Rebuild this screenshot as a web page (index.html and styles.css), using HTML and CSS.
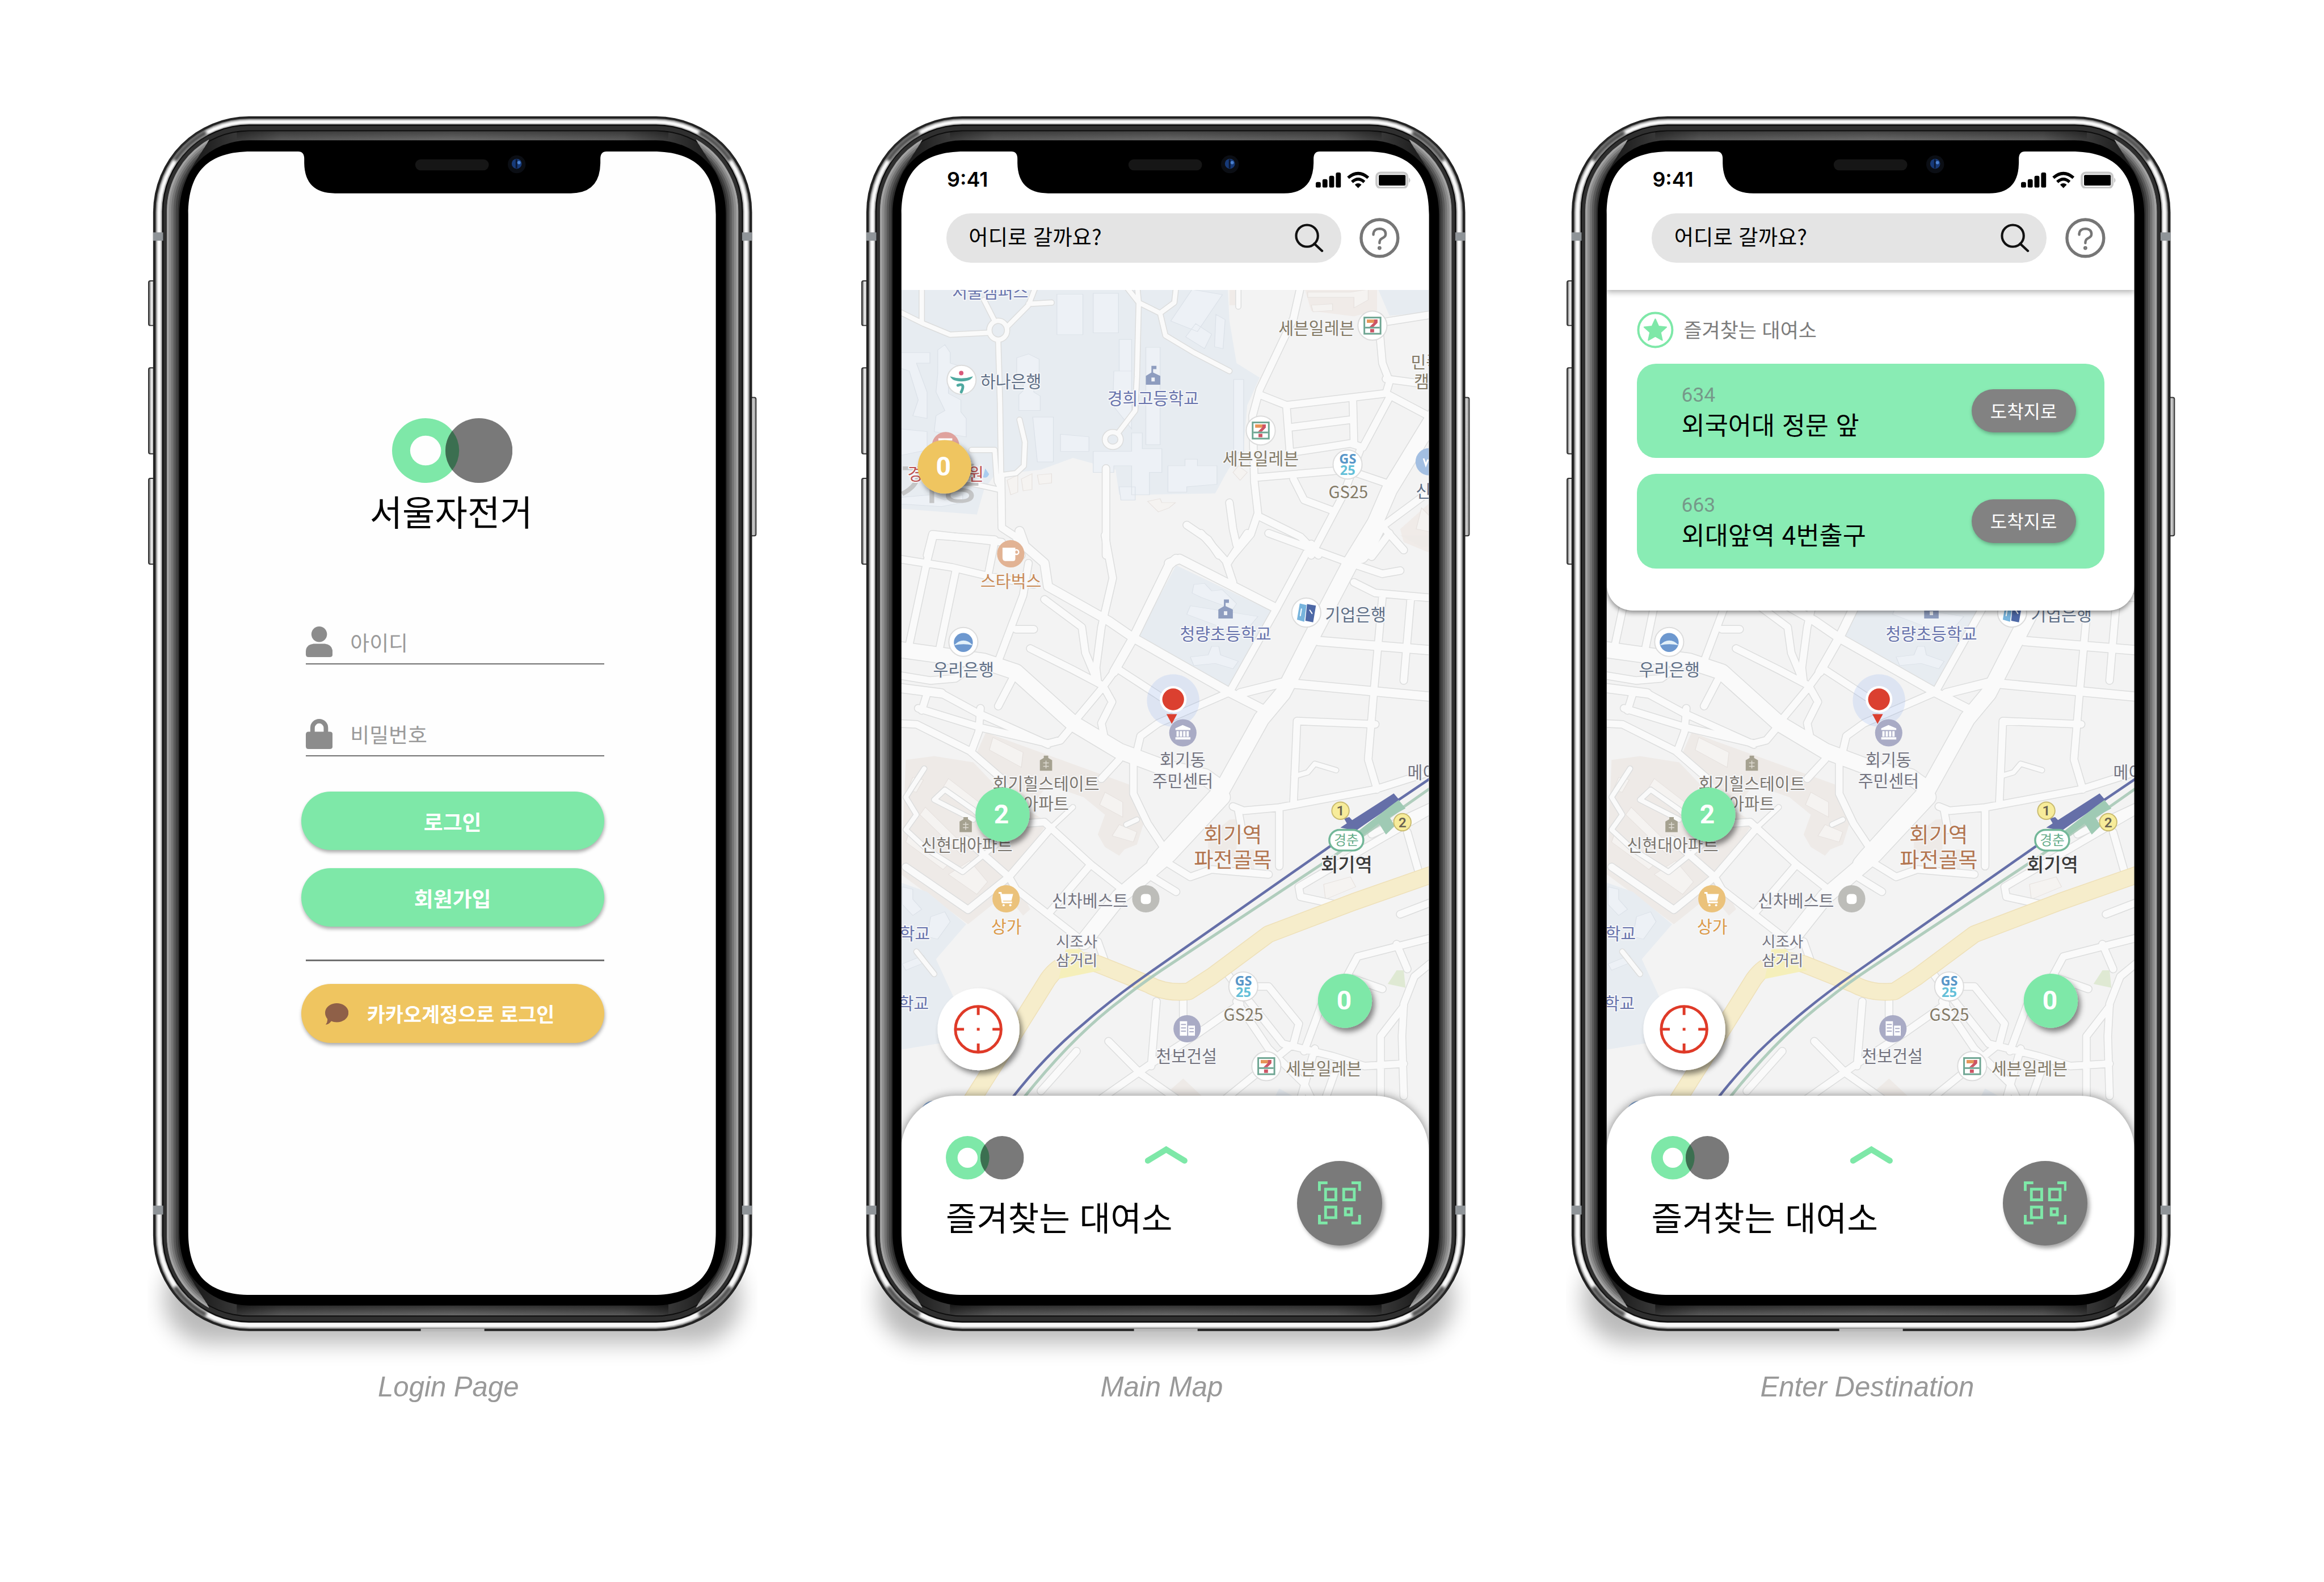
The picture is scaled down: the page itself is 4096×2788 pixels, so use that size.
FILE: index.html
```html
<!DOCTYPE html>
<html lang="ko">
<head>
<meta charset="utf-8">
<title>서울자전거</title>
<link rel="stylesheet" href="styles.css">
</head>
<body>

<svg class="library" width="0" height="0" aria-hidden="true">
  <defs>
    <linearGradient id="topbar" x1="0" x2="1" y1="0" y2="0">
      <stop offset="0" stop-color="#0c0c0c"/><stop offset=".07" stop-color="#222"/><stop offset=".2" stop-color="#5a5a5a"/><stop offset=".5" stop-color="#6a6a6a"/><stop offset=".8" stop-color="#5a5a5a"/><stop offset=".93" stop-color="#222"/><stop offset="1" stop-color="#0c0c0c"/>
    </linearGradient>
    <linearGradient id="barfadeTop" x1="0" x2="0" y1="0" y2="1">
      <stop offset="0" stop-color="#000" stop-opacity=".35"/><stop offset="1" stop-color="#000" stop-opacity="0"/>
    </linearGradient>
    <linearGradient id="barfadeBottom" x1="0" x2="0" y1="0" y2="1">
      <stop offset="0" stop-color="#000" stop-opacity=".6"/><stop offset="1" stop-color="#000" stop-opacity="0"/>
    </linearGradient>
    <linearGradient id="key" x1="0" x2="1" y1="0" y2="0">
      <stop offset="0" stop-color="#444"/><stop offset=".35" stop-color="#eee"/><stop offset="1" stop-color="#999"/>
    </linearGradient>
    <filter id="soft" x="-20%" y="-60%" width="140%" height="240%"><feGaussianBlur stdDeviation="20"/></filter>
    <filter id="soft-s" x="-50%" y="-50%" width="200%" height="200%"><feGaussianBlur stdDeviation="2.500"/></filter>
    <filter id="drop" x="-30%" y="-30%" width="180%" height="180%"><feDropShadow dx="5" dy="7" stdDeviation="5" flood-color="#000" flood-opacity=".45"/></filter>

    <mask id="opening" maskUnits="userSpaceOnUse" x="-20" y="-10" width="1120" height="2300">
      <rect x="-20" y="-10" width="1120" height="2300" fill="#fff"/>
      <path fill="#000" d="M63,176C63,99 99,63 176,63H260Q271,63 271,76V84Q272,138 326,138H749Q801,138 802,84V76Q802,63 813,63H896C973,63 1009,99 1009,176V2000C1009,2077 973,2113 896,2113H176C99,2113 63,2077 63,2000Z"/>
    </mask>
    <clipPath id="wedge">
      <path d="M103,38C60,62 24,110 24,172V2006C24,2068 60,2116 103,2140C80,2100 47,2065 47,2002V176C47,113 80,78 103,38Z"/>
    </clipPath>

    <g id="side-glow" fill="none" stroke-width="5">
      <g clip-path="url(#wedge)">
        <path stroke="#a2a2a2" d="M101,44A146,146 0 0 0 27,170V2008A146,146 0 0 0 101,2134"/>
        <path stroke="#8c8c8c" d="M101,48A142,142 0 0 0 31,170V2008A142,142 0 0 0 101,2130"/>
        <path stroke="#747474" d="M101,52A138,138 0 0 0 35,170V2008A138,138 0 0 0 101,2126"/>
        <path stroke="#5a5a5a" d="M101,56A134,134 0 0 0 39,170V2008A134,134 0 0 0 101,2122"/>
        <path stroke="#424242" d="M101,60A130,130 0 0 0 43,170V2008A130,130 0 0 0 101,2118"/>
        <path stroke="#2c2c2c" d="M101,64A126,126 0 0 0 47,170V2008A126,126 0 0 0 101,2114"/>
      </g>
      <path stroke="#4a4a4a" stroke-width="9" filter="url(#soft-s)" d="M39,79A162,162 0 0 1 95,29"/>
      <path stroke="#4a4a4a" stroke-width="9" filter="url(#soft-s)" d="M39,2099A162,162 0 0 0 95,2149"/>
    </g>

    <symbol id="frame" viewBox="-10 0 1094 2270">
      <g mask="url(#opening)">
        <rect x="20" y="2040" width="1034" height="160" rx="80" fill="#000" opacity=".27" filter="url(#soft)"/>
        <g fill="url(#key)" stroke="#333" stroke-width="2">
          <rect x="-8" y="295" width="14" height="80" rx="3"/>
          <rect x="-8" y="451" width="14" height="154" rx="3"/>
          <rect x="-8" y="649" width="14" height="154" rx="3"/>
          <rect x="1067" y="504" width="14" height="248" rx="3"/>
        </g>
        <rect width="1074" height="2178" rx="172" fill="#232323"/>
        <rect x="4.500" y="4" width="1065" height="2170" rx="168" fill="#8c8c8c"/>
        <rect x="6.500" y="6" width="1061" height="2166" rx="166" fill="#d2d2d2"/>
        <rect x="8.500" y="8" width="1057" height="2162" rx="164" fill="#f8f8f8"/>
        <rect x="13.500" y="12.500" width="1047" height="2151" rx="159" fill="#bdbdbd"/>
        <rect x="16" y="14.500" width="1042" height="2148" rx="156" fill="#0c0c0c"/>
        <rect x="18.500" y="17" width="1037" height="2143" rx="153" fill="#2f2f2f"/>
        <rect x="25" y="25" width="1024" height="2127" rx="147" fill="#0d0d0d"/>
        <rect x="26" y="27" width="1022" height="2123" rx="146" fill="url(#topbar)"/>
        <rect x="150" y="27" width="774" height="16" fill="url(#barfadeTop)"/>
        <rect x="150" y="2130" width="774" height="20" fill="url(#barfadeBottom)"/>
        <rect x="44" y="43" width="986" height="2089" rx="128" fill="#000"/>
        <use href="#side-glow"/>
        <use href="#side-glow" transform="translate(1074 0) scale(-1 1)"/>
        <g fill="#8f9498">
          <rect y="208" width="18" height="15"/><rect x="1056" y="208" width="18" height="15"/>
          <rect y="1953" width="18" height="16"/><rect x="1056" y="1953" width="18" height="16"/>
        </g>
        <path d="M480,2176H594" stroke="#b9b9b9" stroke-width="5"/>
      </g>
      <rect x="470" y="77" width="132" height="20" rx="10" fill="#161616"/>
      <circle cx="652" cy="86" r="16" fill="#0b0e14"/>
      <circle cx="652" cy="85" r="9" fill="#173a78"/>
      <rect x="650" y="77" width="3" height="16" fill="#0b1730"/>
      <circle cx="656" cy="83" r="3" fill="#4a80cf"/>
    </symbol>

    <symbol id="logo" viewBox="0 0 140 78">
      <path fill="#7ee8a8" fill-rule="evenodd" d="M39,0a39,39 0 1 1 0,78a39,39 0 1 1 0,-78zM39,21a18,18 0 1 0 0,36a18,18 0 1 0 0,-36z"/>
      <circle cx="101" cy="39" r="39" fill="#797979"/>
      <path fill="#3b6f50" d="M70,15.400A39,39 0 0 1 70,62.600A39,39 0 0 1 70,15.400z"/>
    </symbol>

    <!-- base map: roads are stroked twice, once as casing and once as surface -->
    <g id="roads" fill="none" stroke-linejoin="round" stroke-linecap="round">
      <g transform="matrix(.6378 0 0 .472 1600 250)">
        <g class="w1">
          <path d="M0,640L90,700 165,742 270,735M85,560V690M260,610L290,690M405,560L385,630 325,712M385,625L450,620M300,770L305,1000 308,1280M690,550L695,620 755,660 770,745 850,810 950,880M800,560L795,620 755,660M660,560L695,620 690,900 685,1030 640,1110M360,1065L375,1150 372,1240 350,1268 310,1275M225,1180H290L296,1300 308,1330M200,1300L250,1315 300,1330M975,560V635"/>
          <ellipse cx="300" cy="725" rx="25" ry="36"/><ellipse cx="622" cy="1140" rx="22" ry="28"/>
        </g>
        <g class="w2">
          <path d="M308,1280L310,1475M603,1250V1580M1150,560L1130,680 1035,950 1015,1050 1020,1300 1030,1420 1010,1500 960,1580M1035,970L1110,1010 1390,965 1530,1065M1390,965L1400,920 1380,850 1370,700M1380,695L1530,663M1390,910L1530,935M1110,1010L1120,1190 1220,1170 1290,1155 1325,1170 1400,980M1115,1095L1290,1065M1297,990L1300,1150M1020,1285L1280,1255 1400,1310M1130,1290L1160,1370 1240,1410M1320,1170L1270,1350 1180,1580M950,1380L960,1480 970,1540M830,1465L890,1520 920,1580M1030,1430L1150,1510 1200,1580M1530,1320L1380,1470 1440,1560M100,1580L115,1500 310,1530M310,1475L350,1510 365,1580M1380,1470L1340,1580"/>
        </g>
        <path class="w3" d="M1540,1020L1400,1330 1320,1580"/>
      </g>
      <g transform="matrix(.6378 0 0 .3827 1600 960)">
        <g class="w2">
          <path d="M0,105L170,150 270,190 400,230M120,0L290,20M118,0L100,120 50,510M180,170L135,530M290,30L270,200M385,130L370,280 300,590M430,300L535,430 545,550 580,690M600,0L622,200 590,430 575,620 580,690M0,650L110,680 180,670 220,620M75,810L250,900 440,975 475,960 510,890M0,880L70,885 220,1010 310,1140M100,740L85,820M250,810L245,920 225,1010M350,640L300,800M350,440L400,440M390,530L510,630 590,700M870,-10L940,120 960,220M1000,-10L945,130M1060,-10L1290,130M1180,40L1080,350 950,735M1290,130L1380,180 1430,165M1400,-10L1350,100M1300,220L1360,270 1530,295M1380,290L1355,750 1340,1050 1365,1190M1460,290L1440,680M640,630L760,760M950,735L750,880 700,940 690,1010M625,640L590,720 510,880M600,720L620,780 590,880 600,960M1360,885L1140,870 1130,1260M960,1270L990,1290 1090,1275 1360,1190 1530,1100M1530,1260L1350,1400M1090,1290V1550M975,1290L985,1380M680,1060V1210L720,1350 780,1500M640,1050L590,1140M440,980L240,830 140,740"/>
        </g>
        <g class="w2b">
          <path d="M360,-20L375,50 430,130 440,240 610,400 680,480 950,735 1050,820M780,130L810,110 1080,340M800,110L780,140 680,480 625,640M1200,495L1530,540M980,740L1100,690 1530,758M950,735L1050,820M0,710L140,740"/>
        </g>
        <path class="w1" d="M1130,1130L1170,1110 1190,1070 1250,1100"/>
        <path class="w3" d="M0,530L260,590 350,640 510,880 640,1010 760,1085 880,1130 930,1190"/>
        <path class="w3" d="M1360,-60L1290,130 1180,480 1100,740 1040,860 930,1190 760,1500 740,1540"/>
      </g>
      <g transform="matrix(.6378 0 0 .4464 1600 1300)">
        <g class="w1"><path d="M92,175L40,290 70,360 40,420 100,500 200,590 330,440M230,380L120,300 150,260 230,340 310,450M510,330L450,410M70,910L120,1000M690,380L660,400"/></g>
        <g class="w2">
          <path d="M40,570L215,742 330,610 450,410M210,460L330,610 350,660 440,760 530,860M330,400L430,390 560,560 640,650M560,560L440,760M580,870L600,950M720,600L800,670M760,540L840,610 900,580 1060,600M1530,330L1360,470 1145,650 1150,690 1280,730M1450,430L1480,580M1530,705L1430,760M1530,850L1310,930 1280,1010 1380,1060M1420,880L1450,980M1530,940L1470,1010 1440,1120 1435,1250 1440,1490M1440,1130L1375,1250V1490M1220,1080L1160,1310M745,1110L730,1370M820,1100V1170M610,1270L700,1400 800,1500M980,1120L860,1240 730,1360 590,1500M970,1110L1060,1300 1160,1440 1180,1500M940,990L970,1050 1060,1050 1145,1200 1130,1280 940,1500M1000,1100L1100,1280 1240,1330 1330,1370M520,1310L420,1470M1250,1380L1220,1500M1190,1300L1150,1500M1330,1370L1440,1360"/>
        </g>
        <path class="w3" d="M930,290L780,520 640,690 540,870"/>
      </g>
    </g>

    <g id="school-flag"><path fill="#8e9dbf" d="M-13,14V-2L-3,-8V-20H6V-14H0V-8L13,-2V14Z"/><rect x="-3" y="1" width="6" height="7" fill="#eef1f6"/></g>
    <g id="apartment"><path fill="#a5a190" d="M-11,13V-6L-4,-10V-14H4V-10L11,-6V13Z"/><path stroke="#dedbd2" stroke-width="1.500" d="M-5,-1H5M-5,5H5M0,-5V9"/></g>
    <g id="seven">
      <circle r="26" fill="#fff" stroke="#dcdcdc" stroke-width="2"/>
      <rect x="-14.500" y="-14.500" width="29" height="29" fill="#fff" stroke="#6ea592" stroke-width="3"/>
      <path fill="#e79558" d="M-10,-11H9V-5H-10Z"/><path fill="#cc5565" d="M9,-11V-5L2,2H-5L3,-6V-11ZM-4,6H3V12H-4Z"/><path fill="#6ea592" d="M-13,2H13V5H-13Z"/>
    </g>
    <g id="dot-bank"><circle r="26" fill="#fff" stroke="#dcdcdc" stroke-width="2"/></g>

    <g id="basemap">
      <rect x="1600" y="500" width="1000" height="1620" fill="#f3f3f3"/>
      <g transform="matrix(.6378 0 0 .472 1600 250)">
        <path fill="#e7ecf1" d="M0,560H945L950,690 970,850 1035,905 1000,1010 990,1160 940,1270 910,1345 700,1350 640,1350 630,1255 510,1210 420,1255 290,1275 260,1330 240,1425 0,1400ZM1365,560H1530V655L1400,670Z"/>
        <path fill="#f0ebe8" d="M1160,560H1365V650L1300,672 1180,652ZM1530,1360L1430,1480 1440,1530 1530,1580ZM950,560H970V630H950Z"/>
        <g class="building">
          <path d="M465,588H538V742H465ZM567,585H638V735H567ZM845,570L930,590 860,730 785,690ZM855,700L900,740 880,795 827,750ZM912,665L938,685 932,795 908,788ZM640,760H675V880H640ZM715,790H755V1160H715ZM625,880H675V1100L622,1010ZM962,912H990V1190H962ZM352,830L385,815 415,835V905H400V960L418,975V1030H358V970L370,955V905H352ZM397,1055H455V1225H410ZM475,1120L555,1130V1185H475ZM675,1115H705V1175H760V1265H725V1350H675V1240H625V1265H567V1185H675ZM777,1240H825V1215H860V1240H915V1310L830,1320V1340H777ZM640,1320H685V1370H645ZM27,810H108V850H70L100,960V1060L60,1050 75,990 50,880 27,870ZM130,800L150,780 165,810V850L190,860V900L160,930V965L195,990V1035L210,1060V1130L120,1110 125,1050 150,1030 125,960 130,890ZM27,1100L100,1110V1180L27,1200ZM27,1360L110,1350 150,1370 200,1350V1380L140,1395 27,1385Z"/>
        </g>
        <g class="building-b">
          <path d="M1170,580H1290L1340,570V610L1300,640V600H1240L1170,600ZM1180,630L1240,625V650L1185,655ZM960,1265L975,1240 1000,1265 980,1295ZM325,1295L355,1275V1340L335,1350ZM365,1290L395,1270V1330L370,1335ZM410,1275L450,1270V1305L415,1310ZM720,1375L755,1365 760,1380 798,1380 780,1400 750,1415ZM1490,1400L1512,1430V1490L1475,1480Z"/>
        </g>
      </g>
      <g transform="matrix(.6378 0 0 .3827 1600 960)">
        <path fill="#e7ecf1" d="M800,140L1075,360 955,715 690,480Z"/>
        <path fill="#eeeae7" d="M1430,0H1530V50L1490,55Z"/>
        <path class="building" d="M850,230L880,225 900,260 930,255 970,320 960,345 870,290 845,270ZM840,330L1030,380 1010,420 990,470 830,370ZM840,570L890,560 900,520H920L925,560 975,590 960,625 910,600 850,610Z"/>
      </g>
      <g transform="matrix(.6378 0 0 .4464 1600 1300)">
        <path fill="#eeeae7" d="M40,140L120,125 230,150 330,300 440,390 340,600 390,740 370,765 320,680 215,800 27,600ZM265,30L670,240 710,390 690,480 655,500 640,525 600,490 580,440 600,360 540,290 440,240 390,330 240,110ZM950,380L970,378V500H1020V610L985,605 960,540 890,510V450ZM780,1470L820,1420 880,1500H770Z"/>
        <path fill="#e7ecf1" d="M0,620L100,670 210,800 125,940 180,1110 150,1275 0,1310ZM1075,1500L1090,1460 1140,1500Z"/>
        <path class="building" d="M30,650L60,660V700L85,740 60,765 30,720ZM110,770L150,750 165,790 130,860 100,850ZM30,960L90,925 100,950 40,985Z"/>
        <path class="building-b" d="M285,50L370,110 365,170 275,100ZM60,210L90,220 70,270 45,260ZM160,215L300,370 285,400 145,250ZM95,330L215,500 195,520 80,360ZM50,430L160,560 145,580 40,470ZM220,545L270,630 240,680 160,600ZM600,270L650,310V370L585,320ZM640,400L690,430 680,470 620,445ZM1215,640L1290,610 1305,650 1220,700Z"/>
        <path fill="#dfe9d3" d="M1420,985L1395,1040 1445,1055 1440,985Z"/>
      </g>
      <use href="#roads" class="casing"/>
      <use href="#roads" class="surface"/>
      <g transform="matrix(.6378 0 0 .4464 1600 1300)" fill="none" stroke-linejoin="round">
        <path class="artery-edge" d="M220,1520L300,1340 440,1020Q490,920 580,960L720,1040Q770,1080 835,1070L900,1010 1060,840 1300,710 1540,590"/>
        <path class="artery" d="M220,1520L300,1340 440,1020Q490,920 580,960L720,1040Q770,1080 835,1070L900,1010 1060,840 1300,710 1540,590"/>
        <path fill="#f5efba" d="M490,900H530L590,985 470,1020Z"/>
        <path class="rail-green" d="M370,1500Q510,1250 640,1110Q700,1040 780,965L1240,530 1540,228"/>
        <path class="rail-blue" d="M338,1500Q430,1330 540,1200Q620,1100 720,1000L1240,480 1540,190"/>
        <path fill="#9fcab4" d="M1300,440L1425,300 1445,335 1400,370 1415,405 1390,440 1370,395 1320,450Z"/>
        <path fill="#656fa8" d="M1262,412L1280,395 1272,375 1287,370 1295,382 1412,275 1427,300 1305,425Z"/>
      </g>

      <use href="#school-flag" x="2069" y="676"/><use href="#school-flag" x="2199" y="1095"/>
      <use href="#apartment" x="1877" y="1369"/><use href="#apartment" x="1733" y="1479"/>
      <use href="#seven" x="2462.300" y="584"/><use href="#seven" x="2262" y="772"/><use href="#seven" x="2272" y="1911.600"/>
      <g fill="none" stroke-linecap="round">
        <use href="#dot-bank" x="1725.600" y="681"/>
        <circle cx="1725" cy="669" r="4" fill="#d8597a"/><path fill="#4fa9a0" d="M1705,675Q1725,682 1746,675Q1742,684 1725,684Q1709,684 1705,675Z"/><path stroke="#4fa9a0" stroke-width="5" d="M1719,691Q1733,686 1725,703"/>
        <use href="#dot-bank" x="1728.800" y="1151"/>
        <circle cx="1728.800" cy="1152" r="17" fill="#6d98cf"/><path fill="#e3f1fa" d="M1712,1157Q1729,1140 1746,1157Q1729,1153 1712,1157Z"/>
        <use href="#dot-bank" x="2343.700" y="1098.500"/>
        <path fill="#77b4dd" d="M2332,1082L2344,1085 2340,1115 2327,1111Z"/><path fill="#4d68a6" d="M2345,1083L2361,1086 2356,1116 2342,1113Z"/><path stroke="#fff" stroke-width="2" d="M2335,1092L2333,1104M2350,1094L2354,1100"/>
        <use href="#dot-bank" x="2417.700" y="833"/><use href="#dot-bank" x="2230.800" y="1768.700"/>
      </g>
      <circle cx="1813.700" cy="993" r="24.500" fill="#e2b394"/><path fill="#fff" d="M1799,982H1822V1002Q1822,1006 1818,1006H1804Q1799,1006 1799,1000Z"/><circle cx="1824" cy="990" r="4" fill="none" stroke="#fff" stroke-width="2.500"/>
      <circle cx="1805.400" cy="1611.600" r="24.500" fill="#ebc27b"/><path fill="none" stroke="#fff" stroke-width="3" d="M1792,1601H1796L1799,1618H1816"/><path fill="#fff" d="M1797,1603H1818L1815,1615H1799Z"/><circle cx="1801" cy="1623" r="2" fill="#fff"/><circle cx="1813" cy="1623" r="2" fill="#fff"/>
      <circle cx="2056" cy="1611.600" r="24.500" fill="#bdbdb9"/><rect x="2047" y="1603" width="18" height="18" rx="6" fill="#fff"/>
      <circle cx="2130" cy="1844.600" r="24.500" fill="#a9abc5"/><path fill="#fff" d="M2117,1831H2130V1857H2117ZM2132,1839H2144V1857H2132Z"/><path stroke="#a9abc5" stroke-width="2" d="M2119,1837H2128M2119,1843H2128M2119,1849H2128M2134,1844H2142M2134,1850H2142"/>
      <circle cx="2564" cy="828" r="24.500" fill="#a3bfe2"/><path d="M2554,822L2558,834L2562,824" fill="none" stroke="#fff" stroke-width="3"/>
      <circle cx="1697" cy="799" r="24.500" fill="#dfa29d"/><path d="M1684,788H1709" stroke="#fff" stroke-width="4"/>
      <path fill="#a9cdf0" d="M1768,840L1775,850Q1772,858 1764,856Z"/>
      <circle cx="1676" cy="1998" r="24.500" fill="#7fa4d3"/>
    </g>
  </defs>
</svg>

<main class="board">
  <figure class="phone phone-login">
    <div class="device">
      <section class="screen login">
        <svg class="login-logo" viewBox="0 0 140 78" preserveAspectRatio="none"><use href="#logo" width="140" height="78"/></svg>
        <h1 class="login-title">서울자전거</h1>
        <form class="login-form">
          <label class="field">
            <svg class="field-icon" viewBox="0 0 48 56"><circle cx="24" cy="14" r="14"/><path d="M14,31H34Q48,33 48,45V50Q48,55 43,55H5Q0,55 0,50V45Q0,33 14,31Z"/></svg>
            <span>아이디</span>
          </label>
          <label class="field">
            <svg class="field-icon" viewBox="0 0 48 56"><path fill-rule="evenodd" d="M8,24V17A16,16 0 0 1 40,17V24H43Q48,24 48,29V50Q48,55 43,55H5Q0,55 0,50V29Q0,24 5,24ZM16,24H32V17A8,8 0 0 0 16,17Z"/></svg>
            <span>비밀번호</span>
          </label>
          <button type="button" class="pill">로그인</button>
          <button type="button" class="pill">회원가입</button>
          <hr class="divider">
          <button type="button" class="pill pill-kakao">
            <svg class="kakao-icon" viewBox="0 0 42 39"><path d="M21,0C33,0 42,8 42,17S33,34 21,34Q15,34 11,32Q7,38 1,38.500Q5,33 4,28Q0,23 0,17C0,8 9,0 21,0Z"/></svg>
            <span>카카오계정으로 로그인</span>
          </button>
        </form>
      </section>
      <svg class="frame"><use href="#frame"/></svg>
    </div>
    <figcaption>Login Page</figcaption>
  </figure>

  <figure class="phone phone-map">
    <div class="device">
      <section class="screen app">
        <header class="top">
          <div class="status">
            <span class="clock">9:41</span>
            <svg class="status-icons" viewBox="0 0 172 32">
              <path d="M3,20h3q3,0 3,3v5q0,2 -2,2H2q-2,0 -2,-2v-5q0,-3 3,-3zM15,15h3q3,0 3,3v10q0,2 -2,2H14q-2,0 -2,-2v-10q0,-3 3,-3zM27,9h3q3,0 3,3v16q0,2 -2,2H26q-2,0 -2,-2v-16q0,-3 3,-3zM39,3h3q3,0 3,3v22q0,2 -2,2H38q-2,0 -2,-2V6q0,-3 3,-3z"/>
              <g fill="none" stroke="#000" stroke-width="5.500"><path d="M58,12.500Q76,-3 94,12.500"/><path d="M65,20Q76,10 87,20"/></g>
              <path d="M76,31L70,25Q76,20 82,25Z"/>
              <rect x="109" y="3.500" width="55" height="27" rx="7" fill="#fff" stroke="#c8c8c8" stroke-width="4"/><rect x="113" y="7.500" width="48" height="19" rx="2"/><path fill="#c8c8c8" d="M167,12Q172,17 167,22Z"/>
            </svg>
          </div>
          <div class="search-row">
            <div class="search">
              <span>어디로 갈까요?</span>
              <svg class="search-icon" viewBox="0 0 52 52"><circle cx="22" cy="22" r="19.500"/><path d="M35,36L49,49"/></svg>
            </div>
            <svg class="help" viewBox="0 0 72 72"><circle cx="36" cy="36" r="33" stroke-width="5.500"/><path stroke-width="4.500" d="M25,30V28Q26,20 36,19.500Q47,20 47,29Q47,34 40,37Q36,39 36,45"/><circle cx="36" cy="54" r="1.500" stroke-width="4"/></svg>
          </div>
        </header>
        <svg class="map" viewBox="1617 520 946 1560" preserveAspectRatio="xMidYMin slice">
          <use href="#basemap"/>
          <g class="label">
            <text class="school" x="1777" y="534">서울캠퍼스</text>
            <text class="bank" x="1814" y="695">하나은행</text>
            <text class="shop" x="2362" y="599">세븐일레븐</text>
            <text class="school" x="2069" y="726">경희고등학교</text>
            <text class="watermark" x="1686" y="895">기동</text>
            <text class="clinic" x="1697" y="861">경희의료원</text>
            <text class="shop start" x="2531" y="660">민족</text>
            <text class="shop start" x="2537" y="695">캠퍼스</text>
            <text class="shop" x="2262" y="833">세븐일레븐</text>
            <text class="gs" x="2418" y="831">GS</text><text class="gs gs-low" x="2418" y="852">25</text>
            <text class="shop" x="2419" y="893">GS25</text>
            <text class="bank start" x="2540" y="891">신한은행</text>
            <text class="cafe" x="1814" y="1053">스타벅스</text>
            <text class="bank" x="1729" y="1212">우리은행</text>
            <text class="bank" x="2432" y="1113">기업은행</text>
            <text class="school" x="2199" y="1148">청량초등학교</text>
            <text class="office" x="2122" y="1374">회기동</text>
            <text class="office" x="2122" y="1411">주민센터</text>
            <text class="home" x="1877" y="1416">회기힐스테이트</text>
            <text class="home" x="1877" y="1452">아파트</text>
            <text class="home" x="1735" y="1526">신현대아파트</text>
            <text class="alley" x="2212" y="1511">회기역</text>
            <text class="alley" x="2212" y="1556">파전골목</text>
            <text class="station" x="2416" y="1563">회기역</text>
            <text class="office start" x="2525" y="1396">메이</text>
            <text class="market" x="1806" y="1673">상가</text>
            <text class="office" x="1956" y="1626">신차베스트</text>
            <text class="office cross" x="1932" y="1698">시조사</text>
            <text class="office cross" x="1932" y="1732">삼거리</text>
            <text class="school end" x="1669" y="1685">학교</text>
            <text class="school end" x="1667" y="1810">학교</text>
            <text class="gs" x="2231" y="1767">GS</text><text class="gs gs-low" x="2231" y="1788">25</text>
            <text class="shop" x="2231" y="1830">GS25</text>
            <text class="office" x="2129" y="1905">천보건설</text>
            <text class="shop" x="2375" y="1927">세븐일레븐</text>
          </g>
          <g class="exit">
            <rect x="2385" y="1488" width="61" height="37" rx="18.500"/><text class="line-name" x="2415.500" y="1515">경춘</text>
            <circle cx="2405" cy="1453.700" r="15.500"/><text x="2405" y="1462.500">1</text>
            <circle cx="2516" cy="1474.300" r="15.500"/><text x="2516" y="1483">2</text>
          </g>
          <circle cx="2105" cy="1256" r="47" fill="#5b8def" opacity=".14"/>
          <circle cx="2105" cy="1254" r="24" fill="#fff"/><circle cx="2105" cy="1254" r="19.500" fill="#db4030"/>
          <path fill="#db4030" d="M2093,1280.500H2112L2102.500,1298Z"/>
          <circle cx="2122.400" cy="1314" r="24.500" fill="#a9abc5"/>
          <path fill="#fff" d="M2122,1300L2136,1306V1309H2109V1306ZM2111,1311H2115V1321H2111ZM2117,1311H2121V1321H2117ZM2123,1311H2127V1321H2123ZM2129,1311H2133V1321H2129ZM2109,1322H2136V1326H2109Z"/>
          <g class="bubble">
            <circle cx="1695" cy="837" r="48" fill="#efc560"/><text x="1693" y="853">0</text>
            <circle cx="1799" cy="1460.500" r="48.500" fill="#7ee8a8"/><text x="1797" y="1476">2</text>
            <circle cx="2413" cy="1794.500" r="48.500" fill="#7ee8a8"/><text x="2411.500" y="1810">0</text>
          </g>
          <circle cx="1756" cy="1845.500" r="73.500" fill="#fff" filter="url(#drop)"/>
          <g fill="none" stroke="#df3a28" stroke-width="5"><circle cx="1755.500" cy="1845.500" r="41"/><path d="M1755.500,1803V1820M1755.500,1871V1888M1713,1845.500H1730M1781,1845.500H1798"/></g><rect x="1753" y="1843" width="5" height="5" fill="#df3a28"/>
        </svg>
        <section class="sheet">
          <div class="sheet-main">
            <svg class="sheet-logo" viewBox="0 0 140 78"><use href="#logo" width="140" height="78"/></svg>
            <h2 class="sheet-title">즐겨찾는 대여소</h2>
          </div>
          <svg class="chevron" viewBox="0 0 76 34"><path d="M5,28L38,8L71,28"/></svg>
          <button type="button" class="scan">
            <svg class="scan-icon" viewBox="0 0 77 77"><path d="M2.500,17V2.500H17M60,2.500H74.500V17M74.500,60V74.500H60M17,74.500H2.500V60M13.500,14H32V33H13.500ZM46,14H65V33H46ZM13.500,46H32V65H13.500ZM49,49H60V60H49Z"/></svg>
          </button>
        </section>
      </section>
      <svg class="frame"><use href="#frame"/></svg>
    </div>
    <figcaption>Main Map</figcaption>
  </figure>

  <figure class="phone phone-destination">
    <div class="device">
      <section class="screen app app-open">
        <section class="favorites">
          <h2 class="favorites-head">
            <svg class="star" viewBox="0 0 66 66"><circle cx="33" cy="33" r="30.500"/><path d="M33,13.500L39,26.500L53,28L42.500,37.500L45.500,51.500L33,44.500L20.500,51.500L23.500,37.500L13,28L27,26.500Z"/></svg>
            <span>즐겨찾는 대여소</span>
          </h2>
          <article class="stop">
            <div><span class="stop-no">634</span><span class="stop-name">외국어대 정문 앞</span></div>
            <button type="button" class="go">도착지로</button>
          </article>
          <article class="stop">
            <div><span class="stop-no">663</span><span class="stop-name">외대앞역 4번출구</span></div>
            <button type="button" class="go">도착지로</button>
          </article>
        </section>
      </section>
      <svg class="frame"><use href="#frame"/></svg>
    </div>
    <figcaption>Enter Destination</figcaption>
  </figure>
</main>

<script src="script.js"></script>
</body>
</html>
```

FILE: styles.css
```css
/* 1rem = 10 layout units */
html { font-size: 9.8296px; }
* { box-sizing: border-box; margin: 0; }
body { background: #fff; font-family: "Noto Sans CJK KR", "Noto Sans", sans-serif; overflow: hidden; color: #000; }
button { border: 0; font: inherit; }
.library { position: absolute; }

.board { display: flex; gap: 17.1rem; padding: 20.9rem 0 0 26.4rem; height: 283.6rem; }
.phone { width: 109.4rem; flex: none; }
.phone-login { margin-right: 1.4rem; }
.device { display: grid; height: 227rem; }
.device > * { grid-area: 1 / 1; }
.frame { width: 109.4rem; height: 227rem; z-index: 2; pointer-events: none; }
.screen { isolation: isolate; width: 94.6rem; height: 205rem; margin: 6.3rem 0 0 7.3rem; background: #fefefe; overflow: hidden; border-radius: 9.5rem; }
figcaption { font: italic 5rem/6rem "Liberation Sans", Arial, sans-serif; color: #999; text-align: center; padding-right: 1.4rem; margin-top: -2.2rem; }

/* login */
.login { padding: 47.8rem 0 0 20.3rem; display: flex; flex-direction: column; align-items: flex-start; }
.login-logo { width: 21.6rem; height: 11.6rem; margin-left: 16.3rem; }
.login-title { width: 54.4rem; padding-right: .6rem; text-align: center; font-weight: 400; font-size: 6.35rem; line-height: 1; margin-top: 1.8rem; }
.login-form { width: 54.3rem; margin-top: 17.3rem; display: flex; flex-direction: column; }
.field { display: flex; align-items: center; gap: 3.2rem; height: 7.1rem; margin: 0 0 9.4rem .8rem; padding-bottom: .8rem; border-bottom: .3rem solid #707070; font-size: 3.75rem; line-height: 1; color: #9a9a9a; }
.field + .field { margin-bottom: 6.3rem; }
.field-icon { width: 4.8rem; height: 5.6rem; fill: #8c8c8c; }
.pill { height: 10.5rem; border-radius: 5.3rem; background: #7ee8a8; color: #fff; font-size: 3.75rem; line-height: 1; font-weight: 700; box-shadow: .1rem .4rem .7rem rgba(0,0,0,.33); margin-bottom: 3.2rem; padding: .2rem 0 0; }
.divider { border: 0; height: .3rem; background: #707070; margin: 2.7rem 0 4.1rem .8rem; }
.pill-kakao { background: #efc560; display: flex; align-items: center; padding-left: 4.3rem; gap: 3.3rem; font-size: 3.55rem; }
.kakao-icon { width: 4.2rem; height: 3.9rem; fill: #8f6048; }

/* map app */
.app { display: grid; grid-template: 24.8rem 1fr 35.8rem / 100%; }
.top { grid-area: 1 / 1; background: #fff; z-index: 1; }
.app-open .top { box-shadow: 0 .4rem 1rem rgba(0,0,0,.3); z-index: 3; }
.status { height: 11.1rem; padding: 0 3.1rem 1.1rem 8.2rem; display: flex; align-items: center; justify-content: space-between; }
.clock { font: 600 3.65rem/1 Inter, sans-serif; }
.status-icons { width: 17.2rem; height: 3.2rem; }
.search-row { display: flex; align-items: center; gap: 3.3rem; padding-left: 8.1rem; }
.search { width: 70.8rem; height: 8.8rem; border-radius: 4.4rem; background: #e4e4e4; display: flex; align-items: center; justify-content: space-between; padding: 0 3.1rem 0 4rem; font-size: 3.8rem; line-height: 1; }
.search span { margin-top: -.6rem; }
.search-icon { width: 5.2rem; height: 5.2rem; fill: none; stroke: #111; stroke-width: 4.2; stroke-linecap: round; }
.help { width: 7.2rem; height: 7.2rem; fill: none; stroke: #767676; stroke-linecap: round; }

.map { grid-area: 2 / 1 / 4 / 2; width: 94.6rem; height: 156rem; }
.label text { text-anchor: middle; font-size: 29.7px; paint-order: stroke; stroke: #f5f6f8; stroke-width: 4px; stroke-linejoin: round; font-weight: 400; }
.label .start { text-anchor: start; }
.label .end { text-anchor: end; }
.label .school { fill: #6874ad; }
.label .bank { fill: #5f6f86; }
.label .shop { fill: #847a66; }
.label .home { fill: #7c766f; }
.label .office { fill: #74747f; }
.label .cross { font-size: 27px; }
.label .clinic { fill: #bf5252; }
.label .cafe { fill: #c98a55; }
.label .market { fill: #dc9a48; }
.label .alley { fill: #b3754f; font-size: 38px; }
.label .station { fill: #3b3b3b; font-size: 33.5px; font-weight: 500; }
.label .watermark { fill: #c4c5c6; font-size: 80px; font-weight: 500; stroke: none; }
.label .gs { fill: #5896c8; font: 700 24px "Noto Sans", sans-serif; stroke: none; }
.label .gs-low { fill: #64bfd8; }
.exit text { text-anchor: middle; font: 600 25px Roboto, sans-serif; fill: #6a6352; }
.exit circle { fill: #f7ec9a; stroke: #c9bb70; stroke-width: 2; }
.exit rect { fill: #fff; stroke: #72b798; stroke-width: 3.5; }
.exit .line-name { font: 400 24px "Noto Sans CJK KR", sans-serif; fill: #63ab88; }
.bubble circle { filter: url(#drop); }
.bubble text { text-anchor: middle; font: 700 47px Roboto, sans-serif; fill: #fff; }

.casing { --casing: 3px; stroke: #dcdddd; }
.surface { --casing: 0px; stroke: #fafafa; }
.w1, .w2, .w2b, .w3, .artery, .artery-edge, .rail-blue, .rail-green,
.w1 *, .w2 *, .w2b * { vector-effect: non-scaling-stroke; }
.w1 { stroke-width: calc(8px + var(--casing)); }
.w2 { stroke-width: calc(12px + var(--casing)); }
.w2b { stroke-width: calc(15px + var(--casing)); }
.w3 { stroke-width: calc(27px + var(--casing)); }
.artery-edge { stroke: #eee0b8; stroke-width: 31px; }
.artery { stroke: #f6edcb; stroke-width: 28px; }
.rail-blue { stroke: #656fa8; stroke-width: 4.5px; }
.rail-green { stroke: #b0cdbd; stroke-width: 5px; }
.building { fill: #edf1f6; stroke: #dbe1e8; stroke-width: 2px; }
.building-b { fill: #f5f3f1; stroke: #e6e1de; stroke-width: 2px; }

.sheet { grid-area: 3 / 1; z-index: 2; background: #fff; border-radius: 9.8rem 9.8rem 0 0; box-shadow: 0 0 1.6rem rgba(0,0,0,.45); display: grid; grid-template-columns: 35.7rem 1fr auto; padding: 7.3rem 8.4rem 0 8rem; align-items: start; }
.sheet-logo { width: 14rem; height: 7.8rem; display: block; }
.sheet-title { font-size: 6.05rem; line-height: 1; font-weight: 400; white-space: nowrap; margin-top: 3.6rem; }
.chevron { width: 7.6rem; height: 3.4rem; margin-top: 1.6rem; fill: none; stroke: #7ee8a8; stroke-width: 10.5; stroke-linecap: round; }
.scan { width: 15.2rem; height: 15.2rem; margin-top: 4.4rem; border-radius: 50%; background: #7a7a7a; box-shadow: .4rem .5rem .8rem rgba(0,0,0,.35); display: grid; place-items: center; padding: 0; }
.scan-icon { width: 7.7rem; height: 7.7rem; fill: none; stroke: #7ee8a8; stroke-width: 5; }

.favorites { grid-area: 2 / 1; z-index: 2; align-self: start; height: 57.5rem; background: #fff; border-radius: 0 0 4.6rem 4.6rem; box-shadow: 0 .4rem .9rem rgba(0,0,0,.42); padding: 3.9rem 5.4rem 0; display: flex; flex-direction: column; }
.favorites-head { display: flex; align-items: center; gap: 1.8rem; height: 6.6rem; margin-bottom: 2.7rem; font-weight: 400; font-size: 3.55rem; line-height: 1; color: #7c7c7c; }
.favorites-head span { margin-top: -.2rem; }
.star { width: 6.6rem; height: 6.6rem; fill: #7ee8a8; }
.star circle { fill: none; stroke: #7ee8a8; stroke-width: 4; }
.star path { stroke: #7ee8a8; stroke-width: 2; stroke-linejoin: round; }
.stop { height: 16.95rem; margin-bottom: 2.8rem; border-radius: 3.4rem; background: #89ecb4; display: flex; justify-content: space-between; align-items: center; padding: 0 5.1rem 0 8rem; }
.stop div { display: flex; flex-direction: column; }
.stop-no { font: 400 3.6rem/1 Roboto, sans-serif; color: #76998a; }
.stop-name { font-size: 4.55rem; line-height: 1; margin-top: 1.1rem; }
.go { width: 18.7rem; height: 7.8rem; border-radius: 3.9rem; background: #828282; color: #fff; font-size: 3.25rem; line-height: 1; box-shadow: .1rem .3rem .7rem rgba(0,0,0,.28); padding: 0; }
```

FILE: script.js
```js
// The destination view shares its header, map and bottom sheet with the main map.
const source = document.querySelector('.phone-map .app');
const target = document.querySelector('.app-open');
const favorites = target.querySelector('.favorites');
target.insertBefore(source.querySelector('.top').cloneNode(true), favorites);
target.append(
  source.querySelector('.map').cloneNode(true),
  source.querySelector('.sheet').cloneNode(true)
);
```
